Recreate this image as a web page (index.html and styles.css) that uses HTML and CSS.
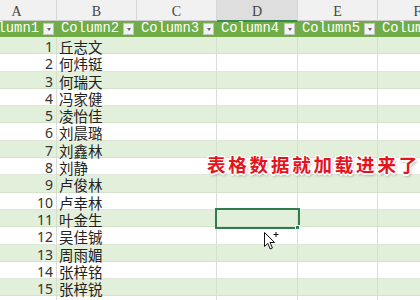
FILE: index.html
```html
<!DOCTYPE html>
<html>
<head>
<meta charset="utf-8">
<link rel="stylesheet" href="styles.css">
</head>
<body>
<div class="sheet">
  <div class="colheads">
    <div class="ch">A</div><div class="ch">B</div><div class="ch">C</div><div class="ch active">D</div><div class="ch">E</div><div class="ch">F</div>
  </div>
  <div class="thead">
    <div class="th"><span>Column1</span><i class="dd"></i></div>
    <div class="th"><span>Column2</span><i class="dd"></i></div>
    <div class="th"><span>Column3</span><i class="dd"></i></div>
    <div class="th"><span>Column4</span><i class="dd"></i></div>
    <div class="th"><span>Column5</span><i class="dd"></i></div>
    <div class="th"><span>Column6</span><i class="dd"></i></div>
  </div>
  <div class="row odd"><div class="c num">1</div><div class="c name">丘志文</div><div class="c"></div><div class="c"></div><div class="c"></div><div class="c"></div></div>
  <div class="row"><div class="c num">2</div><div class="c name">何炜铤</div><div class="c"></div><div class="c"></div><div class="c"></div><div class="c"></div></div>
  <div class="row odd"><div class="c num">3</div><div class="c name">何瑞天</div><div class="c"></div><div class="c"></div><div class="c"></div><div class="c"></div></div>
  <div class="row"><div class="c num">4</div><div class="c name">冯家健</div><div class="c"></div><div class="c"></div><div class="c"></div><div class="c"></div></div>
  <div class="row odd"><div class="c num">5</div><div class="c name">凌怡佳</div><div class="c"></div><div class="c"></div><div class="c"></div><div class="c"></div></div>
  <div class="row"><div class="c num">6</div><div class="c name">刘晨璐</div><div class="c"></div><div class="c"></div><div class="c"></div><div class="c"></div></div>
  <div class="row odd"><div class="c num">7</div><div class="c name">刘鑫林</div><div class="c"></div><div class="c"></div><div class="c"></div><div class="c"></div></div>
  <div class="row"><div class="c num">8</div><div class="c name">刘静</div><div class="c"></div><div class="c"></div><div class="c"></div><div class="c"></div></div>
  <div class="row odd"><div class="c num">9</div><div class="c name">卢俊林</div><div class="c"></div><div class="c"></div><div class="c"></div><div class="c"></div></div>
  <div class="row"><div class="c num">10</div><div class="c name">卢幸林</div><div class="c"></div><div class="c"></div><div class="c"></div><div class="c"></div></div>
  <div class="row odd"><div class="c num">11</div><div class="c name">叶金生</div><div class="c"></div><div class="c sel"></div><div class="c"></div><div class="c"></div></div>
  <div class="row"><div class="c num">12</div><div class="c name">吴佳铖</div><div class="c"></div><div class="c"></div><div class="c"></div><div class="c"></div></div>
  <div class="row odd"><div class="c num">13</div><div class="c name">周雨媚</div><div class="c"></div><div class="c"></div><div class="c"></div><div class="c"></div></div>
  <div class="row"><div class="c num">14</div><div class="c name">张梓铭</div><div class="c"></div><div class="c"></div><div class="c"></div><div class="c"></div></div>
  <div class="row odd"><div class="c num">15</div><div class="c name">张梓锐</div><div class="c"></div><div class="c"></div><div class="c"></div><div class="c"></div></div>
  <div class="row"><div class="c num"></div><div class="c name"></div><div class="c"></div><div class="c"></div><div class="c"></div><div class="c"></div></div>
</div>
<div class="caption">表格数据就加载进来了</div>
<svg class="cursor" width="18" height="22" viewBox="0 0 18 22">
  <path d="M1.5 1.5 L1.5 15.5 L4.8 12.4 L7.2 18 L9.4 17 L7 11.5 L11.6 11.5 Z" fill="#fff" stroke="#111" stroke-width="1" stroke-linejoin="round"/>
  <path d="M13 1 V6 M10.5 3.5 H15.5" stroke="#111" stroke-width="1"/>
</svg>
</body>
</html>
```
FILE: styles.css
```css
html, body {
  margin: 0;
  padding: 0;
  width: 420px;
  height: 300px;
  overflow: hidden;
  background: #fff;
}
.sheet {
  margin-left: -23px;
  width: 481px;
}
.colheads, .thead, .row {
  display: grid;
  grid-template-columns: 80px 80px 80px 81px 80px 80px;
}
.colheads {
  height: 21px;
  background: #f1f1f1;
  border-bottom: 1px solid #c9c9c9;
  box-sizing: border-box;
}
.ch {
  border-right: 1px solid #d6d6d6;
  text-align: center;
  font-family: "Liberation Serif", serif;
  font-size: 14px;
  line-height: 17px;
  padding-top: 3px;
  color: #444;
}
.ch.active {
  background: #dedede;
  border-bottom: 2px solid #3d8a55;
  margin-bottom: -1px;
}
.thead {
  height: 16px;
  background: #70ad47;
}
.th {
  display: flex;
  align-items: center;
  justify-content: space-between;
  padding: 0 3px 0 4px;
  color: #fff;
  font-family: "Liberation Mono", monospace;
  font-size: 13.8px;
  line-height: 16px;
  white-space: nowrap;
  overflow: hidden;
}
.dd {
  width: 11px;
  height: 12px;
  box-sizing: border-box;
  background: #f3f3f3;
  border: 1px solid #c4c4c4;
  display: flex;
  align-items: center;
  justify-content: center;
  flex: none;
}
.dd::after {
  content: "";
  border-left: 2.5px solid transparent;
  border-right: 2.5px solid transparent;
  border-top: 3px solid #666;
}
.row {
  height: 17.3px;
  box-sizing: border-box;
  border-bottom: 1px solid #dfe6da;
  background: #fff;
}
.row.odd {
  background: #e2efda;
  border-bottom-color: #d3e2c8;
}
.c {
  border-right: 1px solid #dcdcdc;
  box-sizing: border-box;
  font-family: "Noto Sans CJK SC", "Noto Sans", sans-serif;
  font-size: 14.5px;
  line-height: 15px;
  padding-top: 2px;
  color: #222;
  white-space: nowrap;
}
.row.odd .c {
  border-right-color: #d4e0cc;
}
.num {
  text-align: right;
  padding-right: 3px;
  font-family: "Noto Sans", sans-serif;
  font-size: 14px;
  color: #333;
}
.name {
  padding-left: 2px;
  border-right-color: transparent;
}
.row.odd .name {
  border-right-color: transparent;
}
.sel {
  position: relative;
  outline: 2px solid #2f7d4f;
  outline-offset: 0px;
}
.sel::after {
  content: "";
  position: absolute;
  right: -3px;
  bottom: -3px;
  width: 5px;
  height: 5px;
  background: #2f7d4f;
  border: 1px solid #fff;
  box-sizing: border-box;
}
.caption {
  position: absolute;
  left: 207px;
  top: 155px;
  font-family: "Noto Sans CJK SC", sans-serif;
  font-weight: 700;
  font-size: 18.5px;
  line-height: 18px;
  letter-spacing: 2.8px;
  white-space: nowrap;
  color: #e5141c;
  text-shadow:
    1.5px 0 0 #fff, -1.5px 0 0 #fff, 0 1.5px 0 #fff, 0 -1.5px 0 #fff,
    1px 1px 0 #fff, -1px -1px 0 #fff, 1px -1px 0 #fff, -1px 1px 0 #fff,
    1px 2px 3px rgba(0,0,0,0.45);
}
.cursor {
  position: absolute;
  left: 263px;
  top: 231px;
}
```
